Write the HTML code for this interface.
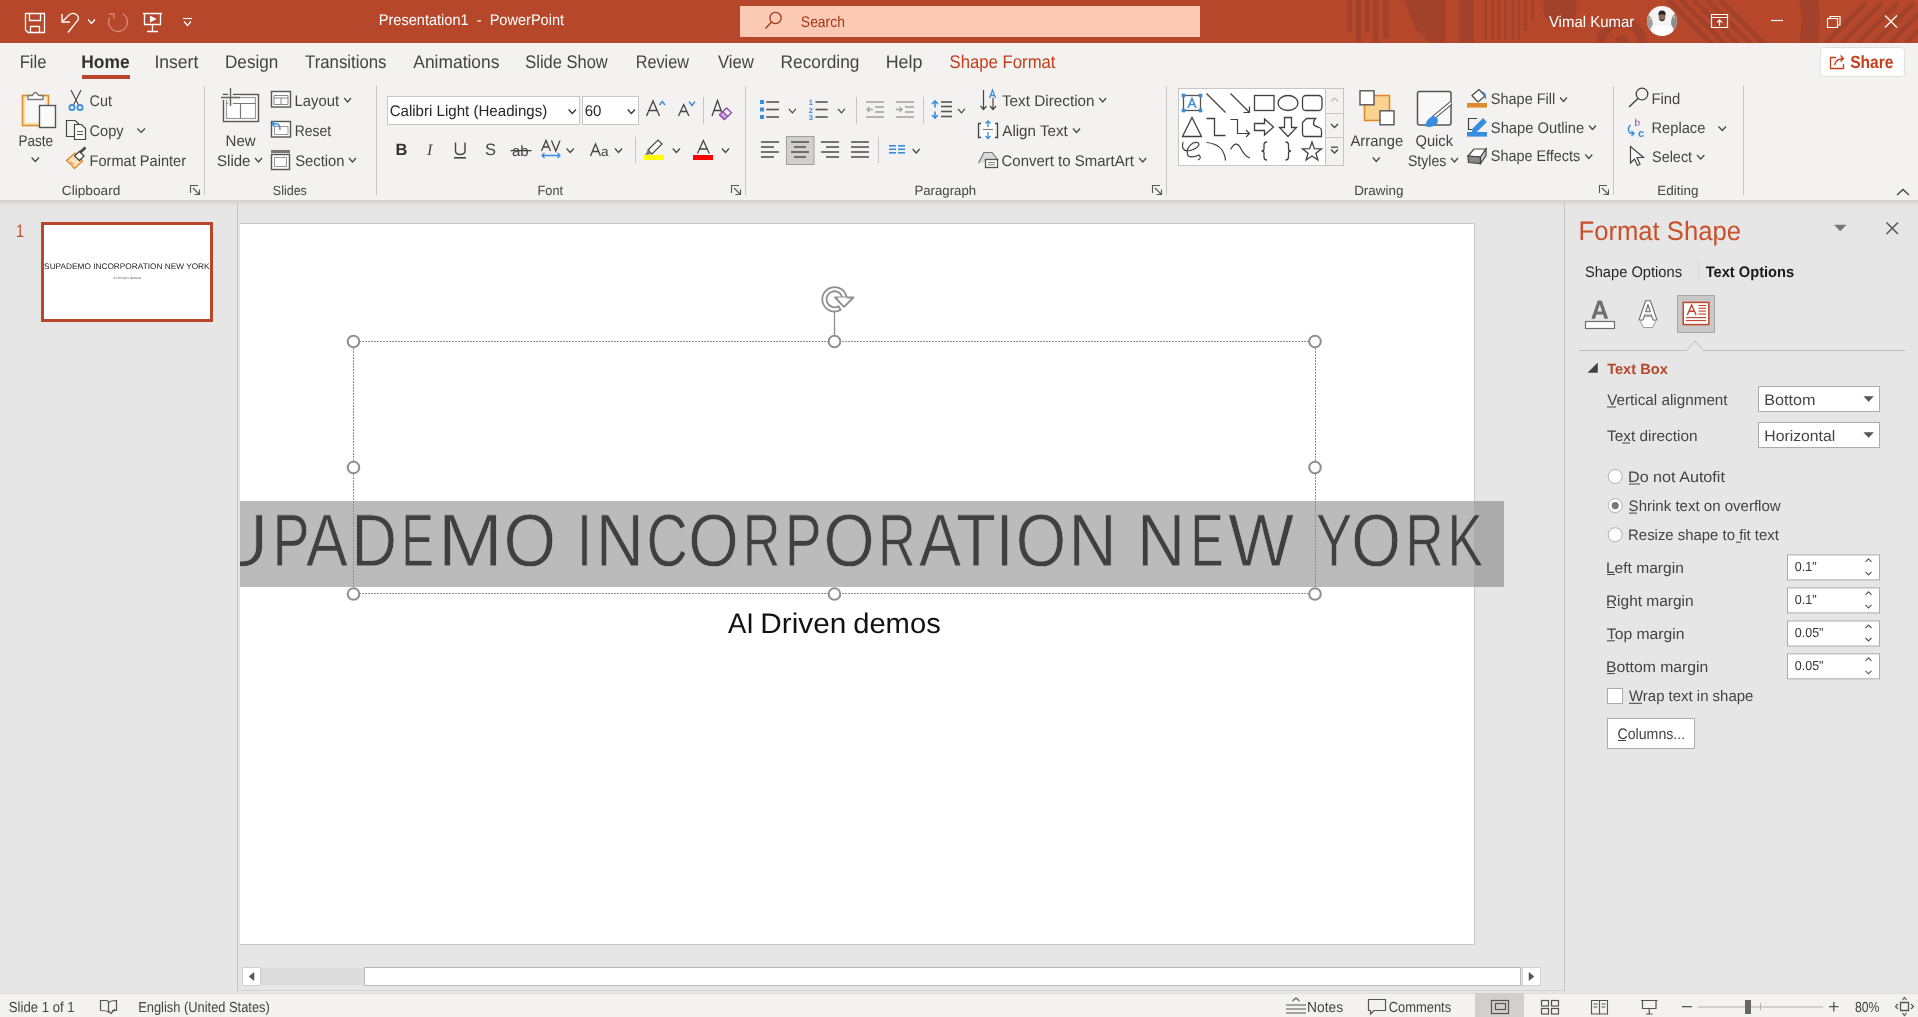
<!DOCTYPE html>
<html><head><meta charset="utf-8"><title>PowerPoint</title>
<style>
html,body{margin:0;padding:0;width:1918px;height:1017px;overflow:hidden;background:#E6E6E6;}
svg{display:block;text-rendering:geometricPrecision;will-change:transform;font-family:"Liberation Sans",sans-serif;}
</style></head><body>
<svg width="1918" height="1017" viewBox="0 0 1918 1017">
<rect x="0" y="0" width="1918" height="43" fill="#B7472A"/>
<clipPath id="tbc"><rect x="0" y="0" width="1918" height="43"/></clipPath><g clip-path="url(#tbc)">
<rect x="1347" y="0" width="5" height="32" fill="#A3422B"/>
<rect x="1356" y="0" width="5" height="42" fill="#A3422B"/>
<rect x="1365" y="0" width="5" height="32" fill="#A3422B"/>
<rect x="1373" y="0" width="5.5" height="43" fill="#A3422B"/>
<rect x="1383" y="0" width="6" height="38" fill="#A3422B"/>
<rect x="1429.5" y="0" width="16.0" height="43" fill="#A3422B"/>
<rect x="1459" y="0" width="15" height="43" fill="#A3422B"/>
<rect x="1484.5" y="0" width="2.0" height="40" fill="#A3422B"/>
<rect x="1491" y="0" width="3" height="40" fill="#A3422B"/>
<rect x="1497.5" y="0" width="2.5" height="40" fill="#A3422B"/>
<rect x="1504" y="0" width="3" height="40" fill="#A3422B"/>
<rect x="1511.5" y="0" width="2.5" height="40" fill="#A3422B"/>
<rect x="1518" y="0" width="2" height="40" fill="#A3422B"/>
<rect x="1524" y="0" width="3" height="30" fill="#A3422B"/>
<rect x="1531" y="0" width="3" height="20" fill="#A3422B"/>
<path d="M1404 0 H1430 V43 L1416 30 Z" fill="#A3422B"/>
<circle cx="1560" cy="8" r="17" fill="#A3422B"/>
<circle cx="1622" cy="44" r="21" fill="none" stroke="#A3422B" stroke-width="9"/>
<circle cx="1622" cy="42" r="7" fill="#A3422B"/>
<path d="M1770 -60 A103 103 0 0 1 1770 104" fill="none" stroke="#A3422B" stroke-width="18"/>
<path d="M1668 0 L1713 45" stroke="#A3422B" stroke-width="5" fill="none"/>
<path d="M1681 0 L1726 45" stroke="#A3422B" stroke-width="5" fill="none"/>
<path d="M1694 0 L1739 45" stroke="#A3422B" stroke-width="5" fill="none"/>
<path d="M1707 0 L1752 45" stroke="#A3422B" stroke-width="5" fill="none"/>
<path d="M1720 0 L1765 45" stroke="#A3422B" stroke-width="5" fill="none"/>
<path d="M1826 43 L1866 3" stroke="#A3422B" stroke-width="5" fill="none"/>
<path d="M1842 43 L1882 3" stroke="#A3422B" stroke-width="5" fill="none"/>
<path d="M1858 43 L1898 3" stroke="#A3422B" stroke-width="5" fill="none"/>
<path d="M1874 43 L1914 3" stroke="#A3422B" stroke-width="5" fill="none"/>
<path d="M1890 43 L1930 3" stroke="#A3422B" stroke-width="5" fill="none"/>
<path d="M1906 43 L1946 3" stroke="#A3422B" stroke-width="5" fill="none"/>
</g>
<rect x="0" y="43" width="1918" height="157" fill="#F3F2F1"/>
<defs><linearGradient id="sh" x1="0" y1="0" x2="0" y2="1"><stop offset="0" stop-color="#D2D0CE"/><stop offset="1" stop-color="#E6E6E6"/></linearGradient></defs>
<rect x="0" y="200" width="1918" height="793" fill="#E6E6E6"/>
<rect x="0" y="200" width="1918" height="6" fill="url(#sh)"/>
<rect x="0" y="993" width="1918" height="24" fill="#F3F2F1"/>
<rect x="0" y="993" width="1918" height="1" fill="#E1DFDD"/>
<path d="M25.5 13.5 H44.5 V32.5 H28 L25.5 30 Z" stroke="#FFFFFF" stroke-width="1.3" fill="none"/>
<path d="M29.5 13.5 V20.5 H40.5 V13.5" stroke="#FFFFFF" stroke-width="1.3" fill="none"/>
<path d="M30.5 32.5 V26.5 H39.5 V32.5" stroke="#FFFFFF" stroke-width="1.3" fill="none"/>
<path d="M62 14 V22 H70" stroke="#FFFFFF" stroke-width="1.3" fill="none"/>
<path d="M62.5 21.5 L69 15 C74 11 80 16 78 20 L68 32.5" stroke="#FFFFFF" stroke-width="1.3" fill="none"/>
<path d="M88 19.5 L91.5 23.5 L95 19.5" stroke="#FFFFFF" stroke-width="1.2" fill="none"/>
<circle cx="118" cy="22" r="9.5" fill="none" stroke="#D98C78" stroke-width="1.3" stroke-dasharray="44 16" transform="rotate(-60 118 22)"/>
<path d="M109 14 H114 V19" stroke="#D98C78" stroke-width="1.3" fill="none"/>
<path d="M143 13.5 H162" stroke="#FFFFFF" stroke-width="1.5" fill="none"/>
<path d="M144.5 13.5 V24.5 H160.5 V13.5" stroke="#FFFFFF" stroke-width="1.3" fill="none"/>
<path d="M152.5 24.5 V31.5 M147 31.5 H158" stroke="#FFFFFF" stroke-width="1.3" fill="none"/>
<path d="M150.5 16.5 L155.5 19 L150.5 21.5 Z" stroke="#FFFFFF" stroke-width="1.1" fill="#FFFFFF"/>
<path d="M183 18.5 H192" stroke="#FFFFFF" stroke-width="1.2" fill="none"/>
<path d="M184 21.5 L187.5 25.5 L191 21.5" stroke="#FFFFFF" stroke-width="1.2" fill="none"/>
<text x="378.81" y="25.00" font-size="15.41" textLength="185.30" lengthAdjust="spacingAndGlyphs" fill="#FFFFFF">Presentation1  -  PowerPoint</text>
<rect x="740" y="6" width="460" height="31" fill="#FCC9B4"/>
<circle cx="775.5" cy="18" r="5.6" fill="none" stroke="#A0391E" stroke-width="1.3"/>
<path d="M771.5 22 L765.5 28.5" stroke="#A0391E" stroke-width="1.4" fill="none"/>
<text x="800.87" y="26.80" font-size="15.41" textLength="44.03" lengthAdjust="spacingAndGlyphs" fill="#A0391E">Search</text>
<text x="1548.93" y="26.90" font-size="15.55" textLength="85.31" lengthAdjust="spacingAndGlyphs" fill="#FFFFFF">Vimal Kumar</text>
<clipPath id="avc"><circle cx="1662" cy="21" r="15"/></clipPath><g clip-path="url(#avc)">
<rect x="1647" y="6" width="30" height="30" fill="#F4F4F4"/>
<path d="M1647 14 Q1652 16 1653 24 L1650 30 L1647 30 Z" fill="#9C9C9C"/>
<path d="M1677 12 Q1671 15 1671 24 L1674 30 L1677 30 Z" fill="#8E8E8E"/>
<circle cx="1650" cy="19" r="0.9" fill="#E8D84A"/><circle cx="1674" cy="17" r="0.9" fill="#E8D84A"/>
<path d="M1650 37 Q1650 26 1662 25 Q1674 26 1674 37 Z" fill="#FFFFFF"/>
<ellipse cx="1662" cy="17" rx="3.3" ry="4.3" fill="#8B6A58"/>
<path d="M1658.4 15.5 Q1658 10.5 1662 10.5 Q1666 10.5 1665.6 15.5 Q1662 13 1658.4 15.5 Z" fill="#222"/>
<path d="M1659 19 Q1662 23.5 1665 19 Q1662 20.5 1659 19 Z" fill="#333"/>
</g>
<path d="M1711.5 14.5 H1727.5 V27.5 H1711.5 Z M1711.5 17.5 H1727.5" stroke="#FFFFFF" stroke-width="1.2" fill="none"/>
<path d="M1719.5 26 V20 M1717 22.5 L1719.5 20 L1722 22.5" stroke="#FFFFFF" stroke-width="1.2" fill="none"/>
<path d="M1771 20.5 H1783" stroke="#FFFFFF" stroke-width="1.2" fill="none"/>
<path d="M1827.5 18.5 H1837.5 V27.5 H1827.5 Z" stroke="#FFFFFF" stroke-width="1.2" fill="none"/>
<path d="M1830 18 V16.5 H1840 V25 H1838" stroke="#FFFFFF" stroke-width="1.2" fill="none"/>
<path d="M1885 15.5 L1897 27.5 M1897 15.5 L1885 27.5" stroke="#FFFFFF" stroke-width="1.2" fill="none"/>
<text x="19.64" y="68.30" font-size="18.31" textLength="26.80" lengthAdjust="spacingAndGlyphs" fill="#444444">File</text>
<text x="81.34" y="68.30" font-size="18.31" textLength="48.26" lengthAdjust="spacingAndGlyphs" fill="#323130" font-weight="700">Home</text>
<rect x="82" y="75" width="48" height="4" fill="#B7472A"/>
<text x="154.38" y="68.30" font-size="18.31" textLength="43.95" lengthAdjust="spacingAndGlyphs" fill="#444444">Insert</text>
<text x="224.99" y="68.30" font-size="18.31" textLength="53.32" lengthAdjust="spacingAndGlyphs" fill="#444444">Design</text>
<text x="305.03" y="68.30" font-size="18.31" textLength="81.48" lengthAdjust="spacingAndGlyphs" fill="#444444">Transitions</text>
<text x="413.27" y="68.30" font-size="18.31" textLength="86.16" lengthAdjust="spacingAndGlyphs" fill="#444444">Animations</text>
<text x="525.25" y="68.30" font-size="18.31" textLength="82.51" lengthAdjust="spacingAndGlyphs" fill="#444444">Slide Show</text>
<text x="635.67" y="68.30" font-size="18.31" textLength="53.29" lengthAdjust="spacingAndGlyphs" fill="#444444">Review</text>
<text x="717.93" y="68.30" font-size="18.31" textLength="35.83" lengthAdjust="spacingAndGlyphs" fill="#444444">View</text>
<text x="780.58" y="68.30" font-size="18.31" textLength="78.83" lengthAdjust="spacingAndGlyphs" fill="#444444">Recording</text>
<text x="885.74" y="68.30" font-size="18.31" textLength="36.71" lengthAdjust="spacingAndGlyphs" fill="#444444">Help</text>
<text x="949.54" y="68.30" font-size="18.31" textLength="105.98" lengthAdjust="spacingAndGlyphs" fill="#C43E1C">Shape Format</text>
<rect x="1820.5" y="47.5" width="84" height="29" rx="3" fill="#FFFFFF" stroke="#E1DFDD" stroke-width="1"/>
<path d="M1836 57.5 H1830.5 V68.5 H1843.5 V64" stroke="#C43E1C" stroke-width="1.3" fill="none"/>
<path d="M1834.5 65 Q1836 59 1843 58.5 M1840.5 55.5 L1843.5 58.5 L1840.5 61.5" stroke="#C43E1C" stroke-width="1.3" fill="none"/>
<text x="1850.15" y="68.20" font-size="17.44" textLength="43.38" lengthAdjust="spacingAndGlyphs" fill="#C43E1C" font-weight="700">Share</text>
<rect x="22.5" y="95.5" width="26" height="30" fill="#FCE4B8" stroke="#E08A2E" stroke-width="1.6"/>
<rect x="25.5" y="98.5" width="20" height="24" fill="#F8F8F8"/>
<path d="M28 99.5 H43 V95.5 H38.5 Q35.5 89.5 32.5 95.5 H28 Z" fill="#FFFFFF" stroke="#777" stroke-width="1.3"/>
<rect x="39.5" y="105.5" width="16" height="22" fill="#FAFAFA" stroke="#555" stroke-width="1.4"/>
<text x="18.39" y="146.00" font-size="15.41" textLength="34.72" lengthAdjust="spacingAndGlyphs" fill="#444444">Paste</text>
<path d="M31.6 157.5 L35.3 161.5 L39 157.5" stroke="#444" stroke-width="1.2" fill="none"/>
<path d="M71 90 L79 106 M81 90 L73 106" stroke="#444" stroke-width="1.1" fill="none"/>
<circle cx="72" cy="107.5" r="2.6" fill="none" stroke="#3A8DDE" stroke-width="1.8"/>
<circle cx="80" cy="107.5" r="2.6" fill="none" stroke="#3A8DDE" stroke-width="1.8"/>
<text x="89.57" y="105.80" font-size="15.41" textLength="22.33" lengthAdjust="spacingAndGlyphs" fill="#444444">Cut</text>
<path d="M74 136.5 H66.5 V120.5 H75 L79 124" stroke="#444" stroke-width="1.2" fill="none"/>
<path d="M74.5 124.5 H81.5 L85.5 128.5 V139.5 H74.5 Z" fill="#FFF" stroke="#444" stroke-width="1.2"/>
<path d="M77 131.5 H83 M77 134.5 H83" stroke="#555" stroke-width="1" fill="none"/>
<text x="89.56" y="135.70" font-size="15.41" textLength="34.07" lengthAdjust="spacingAndGlyphs" fill="#444444">Copy</text>
<path d="M137.4 128.5 L141.2 132.5 L145 128.5" stroke="#444" stroke-width="1.2" fill="none"/>
<path d="M66.5 160.5 L75 153 L82.5 161 L74.5 168.5 Q72 165 66.5 160.5 Z" fill="#FBE3C2" stroke="#E08A2E" stroke-width="1.5" stroke-linejoin="round"/>
<path d="M70 161.5 L74 164.5" stroke="#E08A2E" stroke-width="1" fill="none"/>
<path d="M74.5 156 L79.5 151.5 L84 156 L79.5 160.5 Z" fill="#FFFFFF" stroke="#444" stroke-width="1.3"/>
<path d="M80 152.5 L85.5 147.5" stroke="#444" stroke-width="2.6" fill="none"/>
<text x="89.60" y="165.60" font-size="15.41" textLength="96.44" lengthAdjust="spacingAndGlyphs" fill="#444444">Format Painter</text>
<text x="61.81" y="194.90" font-size="13.37" textLength="58.58" lengthAdjust="spacingAndGlyphs" fill="#444444">Clipboard</text>
<path d="M190.5 193 V185.5 H198" stroke="#555" stroke-width="1.1" fill="none"/>
<path d="M193 188 L199.5 194.5 M199.5 189.5 V194.5 H194.5" stroke="#555" stroke-width="1.1" fill="none"/>
<rect x="204" y="86" width="1" height="109" fill="#C8C6C4"/>
<rect x="223.5" y="94.5" width="35" height="27" fill="#FFF" stroke="#555" stroke-width="1.4"/>
<rect x="226.5" y="97.5" width="29" height="21" fill="none" stroke="#999" stroke-width="1.2"/>
<path d="M226.5 103.5 H255.5 M240.5 103.5 V118.5" stroke="#777" stroke-width="1.2" fill="none"/>
<rect x="228" y="88" width="5" height="18" fill="#F3F2F1"/>
<rect x="221" y="95" width="19" height="5" fill="#F3F2F1"/>
<path d="M230.5 88 V106 M221 97.5 H240" stroke="#666" stroke-width="1.4" fill="none"/>
<text x="225.57" y="145.60" font-size="15.41" textLength="30.10" lengthAdjust="spacingAndGlyphs" fill="#444444">New</text>
<text x="217.02" y="165.60" font-size="15.41" textLength="33.45" lengthAdjust="spacingAndGlyphs" fill="#444444">Slide</text>
<path d="M255 158 L258.5 162 L262 158" stroke="#444" stroke-width="1.2" fill="none"/>
<rect x="271.5" y="91.5" width="19" height="15.5" fill="#FFF" stroke="#555" stroke-width="1.4"/>
<path d="M274 95.5 H288 M274 95.5 V104.5 H288 V95.5 M281 98 V104.5 M274 98 H288" stroke="#888" stroke-width="1" fill="none"/>
<text x="294.59" y="105.80" font-size="15.41" textLength="44.42" lengthAdjust="spacingAndGlyphs" fill="#444444">Layout</text>
<path d="M344.2 98 L347.6 102 L351 98" stroke="#444" stroke-width="1.2" fill="none"/>
<rect x="271.5" y="121.5" width="19" height="15.5" fill="#FFF" stroke="#555" stroke-width="1.4"/>
<path d="M274.5 126.5 H288 V134.5 H274.5 Z" stroke="#999" stroke-width="1" fill="none"/>
<path d="M272 124 L275 121 M272 124 L275 127 M272 124 H277 Q280 124 280 130" stroke="#3A8DDE" stroke-width="1.4" fill="none"/>
<text x="294.66" y="135.90" font-size="15.41" textLength="36.45" lengthAdjust="spacingAndGlyphs" fill="#444444">Reset</text>
<rect x="271" y="150" width="19" height="3" fill="#777"/>
<rect x="271.5" y="154.5" width="18" height="15" fill="#FFF" stroke="#555" stroke-width="1.4"/>
<rect x="274.5" y="157.5" width="12" height="9" fill="none" stroke="#999" stroke-width="1"/>
<text x="295.13" y="165.60" font-size="15.41" textLength="49.44" lengthAdjust="spacingAndGlyphs" fill="#444444">Section</text>
<path d="M349 158 L352.5 162 L356 158" stroke="#444" stroke-width="1.2" fill="none"/>
<text x="272.83" y="194.90" font-size="13.37" textLength="34.02" lengthAdjust="spacingAndGlyphs" fill="#444444">Slides</text>
<rect x="376" y="86" width="1" height="109" fill="#C8C6C4"/>
<rect x="387.5" y="96.5" width="192" height="28" fill="#FFF" stroke="#C8C6C4" stroke-width="1"/>
<text x="389.63" y="115.80" font-size="15.41" textLength="157.60" lengthAdjust="spacingAndGlyphs" fill="#262626">Calibri Light (Headings)</text>
<path d="M568.6 109.5 L572.3 113.5 L576 109.5" stroke="#333" stroke-width="1.3" fill="none"/>
<rect x="582.5" y="96.5" width="56" height="28" fill="#FFF" stroke="#C8C6C4" stroke-width="1"/>
<text x="584.64" y="116.10" font-size="15.41" textLength="16.75" lengthAdjust="spacingAndGlyphs" fill="#262626">60</text>
<path d="M627.7 109.5 L631.35 113.5 L635 109.5" stroke="#333" stroke-width="1.3" fill="none"/>
<path d="M646.5 116 L653 101 L659.5 116 M648.8 110.5 H657.2" stroke="#444" stroke-width="1.3" fill="none"/>
<path d="M659.5 105 L662.25 101.5 L665 105" stroke="#3A8DDE" stroke-width="1.4" fill="none"/>
<path d="M678.5 116 L683.7 104.5 L688.9 116 M680.4 111.5 H687" stroke="#444" stroke-width="1.3" fill="none"/>
<path d="M689 101.5 L692.0 105.5 L695 101.5" stroke="#3A8DDE" stroke-width="1.4" fill="none"/>
<rect x="703" y="97" width="1" height="27" fill="#C8C6C4"/>
<path d="M712 116 L717.5 100.5 L723 116 M714 110.5 H721" stroke="#444" stroke-width="1.3" fill="none"/>
<path d="M726.7 108 L731.5 112.8 L724.3 119.5 L719.5 114.7 Z" fill="#FFF" stroke="#8E44AD" stroke-width="1.3"/>
<path d="M722.9 111.5 L727.7 116.3 L724.3 119.5 L719.5 114.7 Z" fill="#C9A6DA" stroke="#8E44AD" stroke-width="1.1"/>
<text x="395.5" y="155" font-size="16.5" font-weight="700" fill="#333">B</text>
<text x="427" y="155" font-size="16" font-style="italic" font-family="Liberation Serif" fill="#444">I</text>
<path d="M455.5 142.5 V150.5 Q455.5 154.5 460.2 154.5 Q465 154.5 465 150.5 V142.5" stroke="#444" stroke-width="1.4" fill="none"/>
<rect x="454" y="157" width="12" height="1.6" fill="#444"/>
<text x="485" y="155" font-size="16.5" fill="#444">S</text>
<text x="512" y="156" font-size="15" fill="#444">ab</text>
<rect x="510.5" y="150" width="21" height="1.3" fill="#444"/>
<path d="M541.5 151 L546 140.5 L550.5 151 M543 147 H549 M551.5 140.5 L555.8 151 L560 140.5" stroke="#444" stroke-width="1.3" fill="none"/>
<path d="M542 155.5 H560 M544.5 153 L542 155.5 L544.5 158 M557.5 153 L560 155.5 L557.5 158" stroke="#3A8DDE" stroke-width="1.3" fill="none"/>
<path d="M566.6 148.5 L570.2 152.5 L573.8 148.5" stroke="#444" stroke-width="1.2" fill="none"/>
<path d="M590.5 156 L595.5 144 L600.5 156 M592.5 151.5 H598.5" stroke="#444" stroke-width="1.3" fill="none"/>
<text x="601" y="156" font-size="13.5" fill="#444">a</text>
<path d="M615 148.5 L618.5 152.5 L622 148.5" stroke="#444" stroke-width="1.2" fill="none"/>
<rect x="635" y="137" width="1" height="26" fill="#C8C6C4"/>
<path d="M648 150 L658 140 L662 144 L652 154 Z" fill="#FFF" stroke="#444" stroke-width="1.2"/>
<path d="M648 150 L652 154 L645 155 Z" fill="#777"/>
<rect x="644" y="155" width="20" height="5" fill="#FFFF00"/>
<path d="M672.7 148.5 L676.35 152.5 L680 148.5" stroke="#444" stroke-width="1.2" fill="none"/>
<path d="M697.5 153.5 L703.3 140.5 L709.3 153.5 M699.5 149 H707" stroke="#444" stroke-width="1.3" fill="none"/>
<rect x="693" y="155" width="20" height="5" fill="#FF0000"/>
<path d="M722 148.5 L725.5 152.5 L729 148.5" stroke="#444" stroke-width="1.2" fill="none"/>
<text x="537.55" y="194.90" font-size="13.37" textLength="25.54" lengthAdjust="spacingAndGlyphs" fill="#444444">Font</text>
<path d="M731.5 193 V185.5 H739" stroke="#555" stroke-width="1.1" fill="none"/>
<path d="M734 188 L740.5 194.5 M740.5 189.5 V194.5 H735.5" stroke="#555" stroke-width="1.1" fill="none"/>
<rect x="745" y="86" width="1" height="109" fill="#C8C6C4"/>
<rect x="760" y="100" width="4" height="4" fill="#3A8DDE"/>
<rect x="766.3" y="101.2" width="12.7" height="1.6" fill="#555555"/>
<rect x="760" y="107.5" width="4" height="4" fill="#3A8DDE"/>
<rect x="766.3" y="108.7" width="12.7" height="1.6" fill="#555555"/>
<rect x="760" y="115" width="4" height="4" fill="#3A8DDE"/>
<rect x="766.3" y="116.2" width="12.7" height="1.6" fill="#555555"/>
<path d="M788.8 108.8 L792.4 112.8 L796 108.8" stroke="#444" stroke-width="1.2" fill="none"/>
<text x="808.8" y="105" font-size="7.5" font-weight="700" fill="#3A8DDE">1</text>
<rect x="815.5" y="101.2" width="12.2" height="1.6" fill="#555555"/>
<text x="808.8" y="112.5" font-size="7.5" font-weight="700" fill="#3A8DDE">2</text>
<rect x="815.5" y="108.7" width="12.2" height="1.6" fill="#555555"/>
<text x="808.8" y="120" font-size="7.5" font-weight="700" fill="#3A8DDE">3</text>
<rect x="815.5" y="116.2" width="12.2" height="1.6" fill="#555555"/>
<path d="M838 108.8 L841.5 112.8 L845 108.8" stroke="#444" stroke-width="1.2" fill="none"/>
<rect x="856" y="97" width="1" height="27" fill="#C8C6C4"/>
<rect x="866" y="101.2" width="18" height="1.6" fill="#A6A6A6"/>
<rect x="875" y="106.2" width="9" height="1.6" fill="#A6A6A6"/>
<rect x="875" y="111.2" width="9" height="1.6" fill="#A6A6A6"/>
<rect x="866" y="116.2" width="18" height="1.6" fill="#A6A6A6"/>
<path d="M873 109.5 H867 M869.5 107 L867 109.5 L869.5 112" stroke="#A6A6A6" stroke-width="1.3" fill="none"/>
<rect x="896" y="101.2" width="18" height="1.6" fill="#A6A6A6"/>
<rect x="905" y="106.2" width="9" height="1.6" fill="#A6A6A6"/>
<rect x="905" y="111.2" width="9" height="1.6" fill="#A6A6A6"/>
<rect x="896" y="116.2" width="18" height="1.6" fill="#A6A6A6"/>
<path d="M896 109.5 H902 M899.5 107 L902 109.5 L899.5 112" stroke="#A6A6A6" stroke-width="1.3" fill="none"/>
<rect x="923" y="97" width="1" height="27" fill="#C8C6C4"/>
<path d="M935 101 V107.5 M932 104 L935 101 L938 104 M935 111.5 V118 M932 115 L935 118 L938 115" stroke="#3A8DDE" stroke-width="1.6" fill="none"/>
<rect x="941" y="101.2" width="11" height="1.6" fill="#555555"/>
<rect x="941" y="105.7" width="11" height="1.6" fill="#555555"/>
<rect x="941" y="110.7" width="11" height="1.6" fill="#555555"/>
<rect x="941" y="115.7" width="11" height="1.6" fill="#555555"/>
<path d="M958 108.8 L961.5 112.8 L965 108.8" stroke="#444" stroke-width="1.2" fill="none"/>
<rect x="761" y="141.2" width="18" height="1.6" fill="#555555"/>
<rect x="761" y="146.2" width="13" height="1.6" fill="#555555"/>
<rect x="761" y="151.2" width="18" height="1.6" fill="#555555"/>
<rect x="761" y="156.2" width="13" height="1.6" fill="#555555"/>
<rect x="786.5" y="136.5" width="27.5" height="28" fill="#D2D0CE" stroke="#A19F9D" stroke-width="1"/>
<rect x="791.0" y="141.2" width="18" height="1.6" fill="#555555"/>
<rect x="794.0" y="146.2" width="12" height="1.6" fill="#555555"/>
<rect x="791.0" y="151.2" width="18" height="1.6" fill="#555555"/>
<rect x="794.0" y="156.2" width="12" height="1.6" fill="#555555"/>
<rect x="821" y="141.2" width="18" height="1.6" fill="#555555"/>
<rect x="826" y="146.2" width="13" height="1.6" fill="#555555"/>
<rect x="821" y="151.2" width="18" height="1.6" fill="#555555"/>
<rect x="826" y="156.2" width="13" height="1.6" fill="#555555"/>
<rect x="851" y="141.2" width="18" height="1.6" fill="#555555"/>
<rect x="851" y="146.2" width="18" height="1.6" fill="#555555"/>
<rect x="851" y="151.2" width="18" height="1.6" fill="#555555"/>
<rect x="851" y="156.2" width="18" height="1.6" fill="#555555"/>
<rect x="878" y="137" width="1" height="26" fill="#C8C6C4"/>
<rect x="889" y="145" width="7" height="1.6" fill="#3A8DDE"/>
<rect x="889" y="148.5" width="7" height="1.6" fill="#3A8DDE"/>
<rect x="889" y="152" width="7" height="1.6" fill="#3A8DDE"/>
<rect x="898" y="145" width="7" height="1.6" fill="#3A8DDE"/>
<rect x="898" y="148.5" width="7" height="1.6" fill="#3A8DDE"/>
<rect x="898" y="152" width="7" height="1.6" fill="#3A8DDE"/>
<path d="M912.6 149 L916.2 153 L919.8 149" stroke="#444" stroke-width="1.2" fill="none"/>
<path d="M983.5 90 V109 M980.5 106 L983.5 109.5 L986.5 106" stroke="#444" stroke-width="1.2" fill="none"/>
<path d="M993 98 V109 M990 106 L993 109.5 L996 106" stroke="#444" stroke-width="1.2" fill="none"/>
<path d="M989.5 98 L992.5 90 L995.5 98 M990.5 95.5 H994.5" stroke="#3A8DDE" stroke-width="1.3" fill="none"/>
<text x="1001.96" y="105.80" font-size="15.41" textLength="92.61" lengthAdjust="spacingAndGlyphs" fill="#444444">Text Direction</text>
<path d="M1099.3 98 L1102.6999999999998 102 L1106.1 98" stroke="#444" stroke-width="1.2" fill="none"/>
<path d="M981 123.5 H978.5 V137.5 H981 M995 123.5 H997.5 V137.5 H995" stroke="#444" stroke-width="1.3" fill="none"/>
<rect x="981" y="123" width="14" height="15" fill="#FFFFFF"/>
<path d="M983 129.5 H993" stroke="#777" stroke-width="1.1" fill="none"/>
<path d="M988 121 V127 M985.5 123.5 L988 121 L990.5 123.5 M988 132 V138.5 M985.5 136 L988 138.5 L990.5 136" stroke="#3A8DDE" stroke-width="1.3" fill="none"/>
<text x="1002.27" y="135.70" font-size="15.41" textLength="65.44" lengthAdjust="spacingAndGlyphs" fill="#444444">Align Text</text>
<path d="M1073 128.5 L1076.55 132.5 L1080.1 128.5" stroke="#444" stroke-width="1.2" fill="none"/>
<path d="M978.5 163 L984 152.5 H992 L998 160" fill="#D9D9D9" stroke="#777" stroke-width="1.2"/>
<rect x="985.5" y="159.5" width="12" height="8" fill="#FFF" stroke="#555" stroke-width="1.3"/>
<path d="M988 162.5 H995 M988 164.8 H995" stroke="#777" stroke-width="0.9" fill="none"/>
<text x="1001.54" y="165.70" font-size="15.41" textLength="132.27" lengthAdjust="spacingAndGlyphs" fill="#444444">Convert to SmartArt</text>
<path d="M1139.2 158 L1142.7 162 L1146.2 158" stroke="#444" stroke-width="1.2" fill="none"/>
<text x="914.42" y="194.90" font-size="13.37" textLength="61.74" lengthAdjust="spacingAndGlyphs" fill="#444444">Paragraph</text>
<path d="M1152.5 193 V185.5 H1160" stroke="#555" stroke-width="1.1" fill="none"/>
<path d="M1155 188 L1161.5 194.5 M1161.5 189.5 V194.5 H1156.5" stroke="#555" stroke-width="1.1" fill="none"/>
<rect x="1166" y="86" width="1" height="109" fill="#C8C6C4"/>
<rect x="1178.5" y="88.5" width="165" height="77" fill="#FFFFFF" stroke="#C8C6C4" stroke-width="1"/>
<rect x="1325.5" y="88.5" width="18" height="25" fill="#F3F2F1" stroke="#C8C6C4" stroke-width="1"/>
<rect x="1325.5" y="113.5" width="18" height="24" fill="#F3F2F1" stroke="#C8C6C4" stroke-width="1"/>
<rect x="1325.5" y="137.5" width="18" height="28" fill="#F3F2F1" stroke="#C8C6C4" stroke-width="1"/>
<path d="M1331 101.5 L1334.5 98 L1338 101.5" stroke="#BBB" stroke-width="1.2" fill="none"/>
<path d="M1331 124 L1334.5 127.5 L1338 124" stroke="#444" stroke-width="1.3" fill="none"/>
<rect x="1331" y="146.5" width="7" height="1.3" fill="#444"/>
<path d="M1331 149.5 L1334.5 153 L1338 149.5" stroke="#444" stroke-width="1.3" fill="none"/>
<rect x="1183.5" y="95.5" width="17" height="15" fill="none" stroke="#555" stroke-width="1.3"/>
<rect x="1181.7" y="93.7" width="3.6" height="3.6" fill="#3A8DDE"/>
<rect x="1198.7" y="93.7" width="3.6" height="3.6" fill="#3A8DDE"/>
<rect x="1181.7" y="108.7" width="3.6" height="3.6" fill="#3A8DDE"/>
<rect x="1198.7" y="108.7" width="3.6" height="3.6" fill="#3A8DDE"/>
<path d="M1188 108 L1192 98.5 L1196 108 M1189.5 104.5 H1194.5" stroke="#3A8DDE" stroke-width="1.6" fill="none"/>
<path d="M1206.5 93.5 L1225.5 112.5" stroke="#404040" stroke-width="1.2" fill="none"/>
<path d="M1230.5 93.5 L1249.5 112.5 M1249.5 106.5 V112.5 H1243.5" stroke="#404040" stroke-width="1.2" fill="none"/>
<rect x="1254.5" y="95.5" width="19.5" height="15" fill="none" stroke="#404040" stroke-width="1.3"/>
<ellipse cx="1288" cy="103" rx="10" ry="7.5" fill="none" stroke="#404040" stroke-width="1.3"/>
<rect x="1302.5" y="95.5" width="19.5" height="15" rx="3.5" fill="none" stroke="#404040" stroke-width="1.3"/>
<path d="M1182.5 136.5 L1192 117.5 L1201.5 136.5 Z" stroke="#404040" stroke-width="1.3" fill="none"/>
<path d="M1206.5 118.5 H1214.5 V135.5 H1225.5" stroke="#404040" stroke-width="1.3" fill="none"/>
<path d="M1230.5 119.5 H1237.5 V133.5 H1249.5 M1246 130 L1249.5 133.5 L1246 137" stroke="#404040" stroke-width="1.2" fill="none"/>
<path d="M1254.5 123.5 H1264.5 V119 L1273.5 127 L1264.5 135 V130.5 H1254.5 Z" stroke="#404040" stroke-width="1.3" fill="none"/>
<path d="M1284.5 117.5 H1291.5 V127.5 H1296.5 L1288 136.5 L1279.5 127.5 H1284.5 Z" stroke="#404040" stroke-width="1.3" fill="none"/>
<path d="M1306.5 118.5 H1315.5 Q1313 121 1313.5 124 Q1314 126 1318 127 Q1321.5 128 1321.5 131 V136.5 H1305 Q1302.5 136.5 1302.5 133 V122.5 Z" stroke="#404040" stroke-width="1.3" fill="none"/>
<path d="M1183 142 Q1181 150 1187 151 Q1196 150 1199 145 Q1199 141 1193 143 Q1185 148 1188 156 Q1193 158 1199 155 Q1202 158 1198 160" stroke="#404040" stroke-width="1.2" fill="none"/>
<path d="M1206.5 142.5 Q1224 144 1225.5 160.5" stroke="#404040" stroke-width="1.2" fill="none"/>
<path d="M1230.5 149.5 Q1236 140 1240 147 Q1245 157 1250 158" stroke="#404040" stroke-width="1.2" fill="none"/>
<path d="M1267 142 Q1263.5 142 1264 146 V149 Q1264 151 1261.5 151 Q1264 151 1264 153 V157 Q1264 160 1267 160" stroke="#404040" stroke-width="1.3" fill="none"/>
<path d="M1285.5 142 Q1289 142 1288.5 146 V149 Q1288.5 151 1291 151 Q1288.5 151 1288.5 153 V157 Q1288.5 160 1285.5 160" stroke="#404040" stroke-width="1.3" fill="none"/>
<path d="M1312 142 L1314.4 148.6 L1321.5 148.8 L1315.9 153.2 L1317.9 160 L1312 156 L1306.1 160 L1308.1 153.2 L1302.5 148.8 L1309.6 148.6 Z" stroke="#404040" stroke-width="1.3" fill="none"/>
<rect x="1364.5" y="95.5" width="25" height="25" fill="#FAD391" stroke="#E08A2E" stroke-width="1.6"/>
<rect x="1360" y="90.8" width="14" height="14" fill="#FFF" stroke="#555" stroke-width="1.4"/>
<rect x="1380" y="110.8" width="14" height="14" fill="#FFF" stroke="#555" stroke-width="1.4"/>
<text x="1350.47" y="146.00" font-size="15.41" textLength="52.69" lengthAdjust="spacingAndGlyphs" fill="#444444">Arrange</text>
<path d="M1372.8 157.5 L1376.25 161.5 L1379.7 157.5" stroke="#444" stroke-width="1.2" fill="none"/>
<rect x="1417.5" y="91.5" width="33.5" height="33.5" rx="2" fill="#F8F8F8" stroke="#555" stroke-width="1.5"/>
<path d="M1433 118 L1451 103" stroke="#555" stroke-width="4.2" fill="none"/>
<path d="M1433 118 L1451 103" stroke="#FFF" stroke-width="2" fill="none"/>
<path d="M1425 126 Q1427 118 1433 116 Q1440 117 1437 124 Q1431 129 1425 126 Z" fill="#3A8DDE"/>
<text x="1415.50" y="146.00" font-size="15.41" textLength="37.57" lengthAdjust="spacingAndGlyphs" fill="#444444">Quick</text>
<text x="1407.96" y="165.80" font-size="15.41" textLength="38.35" lengthAdjust="spacingAndGlyphs" fill="#444444">Styles</text>
<path d="M1451 158 L1454.5 162 L1458 158" stroke="#444" stroke-width="1.2" fill="none"/>
<path d="M1472 95.5 L1479 89.5 L1485 96 L1478 102 Z" fill="#FFF" stroke="#444" stroke-width="1.2"/>
<path d="M1482 92 Q1486 93 1485.5 99" stroke="#3A8DDE" stroke-width="1.4" fill="none"/>
<rect x="1467" y="103" width="20" height="4.6" fill="#E08A2E"/>
<text x="1490.84" y="103.70" font-size="15.41" textLength="64.43" lengthAdjust="spacingAndGlyphs" fill="#444444">Shape Fill</text>
<path d="M1560 97.5 L1563.5 101.5 L1567 97.5" stroke="#444" stroke-width="1.2" fill="none"/>
<path d="M1477 118.5 H1468.5 V129.5 H1472" stroke="#444" stroke-width="1.2" fill="none"/>
<path d="M1473 129 L1483 119 L1486 122 L1476 132 L1472.5 132.5 Z" fill="#3A8DDE" stroke="#3A8DDE" stroke-width="1.3"/>
<rect x="1467" y="132" width="20" height="4.6" fill="#3A8DDE"/>
<text x="1490.83" y="132.50" font-size="15.41" textLength="93.32" lengthAdjust="spacingAndGlyphs" fill="#444444">Shape Outline</text>
<path d="M1589 125.5 L1592.5 129.5 L1596 125.5" stroke="#444" stroke-width="1.2" fill="none"/>
<path d="M1468 156 L1474 149 H1486 L1480.5 157 Z" fill="#FFF" stroke="#444" stroke-width="1.2"/>
<path d="M1468 156 L1480.5 157 V163.5 L1468.5 162.5 Z" fill="#888" stroke="#444" stroke-width="1.2"/>
<path d="M1480.5 157 L1486 149 V155.5 L1480.5 163.5 Z" fill="#CCC" stroke="#444" stroke-width="1.2"/>
<text x="1490.85" y="161.40" font-size="15.41" textLength="89.37" lengthAdjust="spacingAndGlyphs" fill="#444444">Shape Effects</text>
<path d="M1585.3 154.5 L1588.8 158.5 L1592.3 154.5" stroke="#444" stroke-width="1.2" fill="none"/>
<text x="1354.20" y="195.00" font-size="13.37" textLength="49.16" lengthAdjust="spacingAndGlyphs" fill="#444444">Drawing</text>
<path d="M1599.5 193 V185.5 H1607" stroke="#555" stroke-width="1.1" fill="none"/>
<path d="M1602 188 L1608.5 194.5 M1608.5 189.5 V194.5 H1603.5" stroke="#555" stroke-width="1.1" fill="none"/>
<rect x="1613" y="86" width="1" height="109" fill="#C8C6C4"/>
<circle cx="1642" cy="94" r="5.8" fill="none" stroke="#444" stroke-width="1.3"/>
<path d="M1638 98.5 L1629 107" stroke="#444" stroke-width="1.5" fill="none"/>
<text x="1651.48" y="103.70" font-size="15.41" textLength="28.87" lengthAdjust="spacingAndGlyphs" fill="#444444">Find</text>
<path d="M1630.5 125 Q1626.5 129 1630 133 L1634 133.5 M1631.5 131 L1634 133.5 L1631.5 136" stroke="#3A8DDE" stroke-width="1.4" fill="none"/>
<text x="1634.5" y="126" font-size="10" fill="#8E44AD">b</text>
<text x="1638" y="136.5" font-size="11" font-weight="700" fill="#3A8DDE">c</text>
<text x="1651.50" y="133.20" font-size="15.41" textLength="53.86" lengthAdjust="spacingAndGlyphs" fill="#444444">Replace</text>
<path d="M1718.5 126.5 L1722.25 130.5 L1726 126.5" stroke="#444" stroke-width="1.2" fill="none"/>
<path d="M1630.5 146.5 V163 L1634.5 159 L1637.5 165.5 L1640 164.2 L1637 157.5 H1643.5 Z" fill="#FFF" stroke="#444" stroke-width="1.2"/>
<text x="1652.05" y="161.80" font-size="15.41" textLength="40.06" lengthAdjust="spacingAndGlyphs" fill="#444444">Select</text>
<path d="M1697 155 L1700.7 159 L1704.4 155" stroke="#444" stroke-width="1.2" fill="none"/>
<text x="1657.30" y="194.80" font-size="13.37" textLength="41.17" lengthAdjust="spacingAndGlyphs" fill="#444444">Editing</text>
<rect x="1743" y="86" width="1" height="109" fill="#C8C6C4"/>
<path d="M1897 195 L1903.0 189.5 L1909 195" stroke="#444" stroke-width="1.4" fill="none"/>
<text x="15.90" y="237.00" font-size="18.02" textLength="8.00" lengthAdjust="spacingAndGlyphs" fill="#C0502D">1</text>
<rect x="41" y="222" width="172" height="100" fill="#B7472A"/>
<rect x="44" y="225" width="166" height="94" fill="#FFFFFF"/>
<clipPath id="thc"><rect x="44" y="225" width="166" height="94"/></clipPath>
<g clip-path="url(#thc)">
<text x="44.13" y="268.80" font-size="8.14" textLength="165.46" lengthAdjust="spacingAndGlyphs" fill="#222222">SUPADEMO INCORPORATION NEW YORK</text>
<text x="113.29" y="278.50" font-size="3.34" textLength="27.64" lengthAdjust="spacingAndGlyphs" fill="#555555">AI Driven demos</text>
</g>
<rect x="237" y="203" width="1" height="788" fill="#C2C2C2"/>
<rect x="238" y="990" width="1327" height="1" fill="#D4D4D4"/>
<rect x="1564" y="203" width="1" height="788" fill="#C2C2C2"/>
<rect x="240" y="224" width="1234" height="720" fill="#FFFFFF"/>
<rect x="240" y="223" width="1235" height="1" fill="#C8C8C8"/>
<rect x="1474" y="223" width="1" height="721" fill="#C8C8C8"/>
<rect x="240" y="944" width="1235" height="1" fill="#C8C8C8"/>
<rect x="240" y="501" width="1234" height="86" fill="#BBBBBB"/>
<rect x="1474" y="501" width="30" height="86" fill="#ABABAB"/>
<clipPath id="slc"><rect x="240" y="200" width="1324" height="790"/></clipPath>
<g clip-path="url(#slc)">
<text x="216.50" y="566.20" font-size="74.42" textLength="51.50" lengthAdjust="spacingAndGlyphs" fill="#404040" stroke="#BBBBBB" stroke-width="0.8">U</text>
<text x="272.44" y="566.20" font-size="74.42" textLength="37.10" lengthAdjust="spacingAndGlyphs" fill="#404040" stroke="#BBBBBB" stroke-width="0.8">P</text>
<text x="305.88" y="566.20" font-size="74.42" textLength="41.85" lengthAdjust="spacingAndGlyphs" fill="#404040" stroke="#BBBBBB" stroke-width="0.8">A</text>
<text x="351.53" y="566.20" font-size="74.42" textLength="45.48" lengthAdjust="spacingAndGlyphs" fill="#404040" stroke="#BBBBBB" stroke-width="0.8">D</text>
<text x="401.17" y="566.20" font-size="74.42" textLength="32.73" lengthAdjust="spacingAndGlyphs" fill="#404040" stroke="#BBBBBB" stroke-width="0.8">E</text>
<text x="437.87" y="566.20" font-size="74.42" textLength="65.25" lengthAdjust="spacingAndGlyphs" fill="#404040" stroke="#BBBBBB" stroke-width="0.8">M</text>
<text x="503.60" y="566.20" font-size="74.42" textLength="52.53" lengthAdjust="spacingAndGlyphs" fill="#404040" stroke="#BBBBBB" stroke-width="0.8">O</text>
<text x="576.65" y="566.20" font-size="74.42" textLength="15.49" lengthAdjust="spacingAndGlyphs" fill="#404040" stroke="#BBBBBB" stroke-width="0.8">I</text>
<text x="595.84" y="566.20" font-size="74.42" textLength="48.09" lengthAdjust="spacingAndGlyphs" fill="#404040" stroke="#BBBBBB" stroke-width="0.8">N</text>
<text x="646.60" y="566.20" font-size="74.42" textLength="41.28" lengthAdjust="spacingAndGlyphs" fill="#404040" stroke="#BBBBBB" stroke-width="0.8">C</text>
<text x="688.13" y="566.20" font-size="74.42" textLength="50.48" lengthAdjust="spacingAndGlyphs" fill="#404040" stroke="#BBBBBB" stroke-width="0.8">O</text>
<text x="742.72" y="566.20" font-size="74.42" textLength="37.70" lengthAdjust="spacingAndGlyphs" fill="#404040" stroke="#BBBBBB" stroke-width="0.8">R</text>
<text x="784.87" y="566.20" font-size="74.42" textLength="36.84" lengthAdjust="spacingAndGlyphs" fill="#404040" stroke="#BBBBBB" stroke-width="0.8">P</text>
<text x="823.48" y="566.20" font-size="74.42" textLength="51.16" lengthAdjust="spacingAndGlyphs" fill="#404040" stroke="#BBBBBB" stroke-width="0.8">O</text>
<text x="878.02" y="566.20" font-size="74.42" textLength="37.70" lengthAdjust="spacingAndGlyphs" fill="#404040" stroke="#BBBBBB" stroke-width="0.8">R</text>
<text x="918.88" y="566.20" font-size="74.42" textLength="42.25" lengthAdjust="spacingAndGlyphs" fill="#404040" stroke="#BBBBBB" stroke-width="0.8">A</text>
<text x="956.14" y="566.20" font-size="74.42" textLength="39.65" lengthAdjust="spacingAndGlyphs" fill="#404040" stroke="#BBBBBB" stroke-width="0.8">T</text>
<text x="995.76" y="566.20" font-size="74.42" textLength="17.87" lengthAdjust="spacingAndGlyphs" fill="#404040" stroke="#BBBBBB" stroke-width="0.8">I</text>
<text x="1015.63" y="566.20" font-size="74.42" textLength="50.48" lengthAdjust="spacingAndGlyphs" fill="#404040" stroke="#BBBBBB" stroke-width="0.8">O</text>
<text x="1068.54" y="566.20" font-size="74.42" textLength="48.09" lengthAdjust="spacingAndGlyphs" fill="#404040" stroke="#BBBBBB" stroke-width="0.8">N</text>
<text x="1137.02" y="566.20" font-size="74.42" textLength="48.22" lengthAdjust="spacingAndGlyphs" fill="#404040" stroke="#BBBBBB" stroke-width="0.8">N</text>
<text x="1190.53" y="566.20" font-size="74.42" textLength="33.10" lengthAdjust="spacingAndGlyphs" fill="#404040" stroke="#BBBBBB" stroke-width="0.8">E</text>
<text x="1228.19" y="566.20" font-size="74.42" textLength="65.74" lengthAdjust="spacingAndGlyphs" fill="#404040" stroke="#BBBBBB" stroke-width="0.8">W</text>
<text x="1316.01" y="566.20" font-size="74.42" textLength="36.18" lengthAdjust="spacingAndGlyphs" fill="#404040" stroke="#BBBBBB" stroke-width="0.8">Y</text>
<text x="1351.37" y="566.20" font-size="74.42" textLength="49.68" lengthAdjust="spacingAndGlyphs" fill="#404040" stroke="#BBBBBB" stroke-width="0.8">O</text>
<text x="1405.38" y="566.20" font-size="74.42" textLength="38.07" lengthAdjust="spacingAndGlyphs" fill="#404040" stroke="#BBBBBB" stroke-width="0.8">R</text>
<text x="1447.61" y="566.20" font-size="74.42" textLength="35.69" lengthAdjust="spacingAndGlyphs" fill="#404040" stroke="#BBBBBB" stroke-width="0.8">K</text>
</g>
<text x="727.95" y="632.75" font-size="28.34" textLength="25.99" lengthAdjust="spacingAndGlyphs" fill="#111111">AI</text>
<text x="760.36" y="632.75" font-size="28.34" textLength="85.87" lengthAdjust="spacingAndGlyphs" fill="#111111">Driven</text>
<text x="853.17" y="632.75" font-size="28.34" textLength="87.58" lengthAdjust="spacingAndGlyphs" fill="#111111">demos</text>
<path d="M353 341.5 H1316" stroke="#8E8E8E" stroke-width="1" fill="none" stroke-dasharray="2 1"/>
<path d="M353 593.5 H1316" stroke="#8E8E8E" stroke-width="1" fill="none" stroke-dasharray="2 1"/>
<path d="M353.5 342 V594" stroke="#8E8E8E" stroke-width="1" fill="none" stroke-dasharray="2 1"/>
<path d="M1315.5 342 V594" stroke="#8E8E8E" stroke-width="1" fill="none" stroke-dasharray="2 1"/>
<path d="M834.5 312 V335" stroke="#8E8E8E" stroke-width="1.3" fill="none"/>
<circle cx="353.5" cy="341.5" r="5.8" fill="#FFFFFF" stroke="#8E8E8E" stroke-width="2"/>
<circle cx="834.5" cy="341.5" r="5.8" fill="#FFFFFF" stroke="#8E8E8E" stroke-width="2"/>
<circle cx="1315" cy="341.5" r="5.8" fill="#FFFFFF" stroke="#8E8E8E" stroke-width="2"/>
<circle cx="353.5" cy="467.5" r="5.8" fill="#FFFFFF" stroke="#8E8E8E" stroke-width="2"/>
<circle cx="1315" cy="467.5" r="5.8" fill="#FFFFFF" stroke="#8E8E8E" stroke-width="2"/>
<circle cx="353.5" cy="594" r="5.8" fill="#FFFFFF" stroke="#8E8E8E" stroke-width="2"/>
<circle cx="834.5" cy="594" r="5.8" fill="#FFFFFF" stroke="#8E8E8E" stroke-width="2"/>
<circle cx="1315" cy="594" r="5.8" fill="#FFFFFF" stroke="#8E8E8E" stroke-width="2"/>
<path d="M846.6 297.6 A12.2 12.2 0 1 0 840.6 309.9 L838.5 306.2 A8 8 0 1 1 842.4 298.2 Z" fill="#FFFFFF" stroke="#8E8E8E" stroke-width="1.8" stroke-linejoin="round"/>
<path d="M835 297.5 H853.5 L844 306.8 Z" fill="#FFFFFF" stroke="#8E8E8E" stroke-width="1.8" stroke-linejoin="round"/>
<rect x="838" y="297.5" width="8.5" height="1.6" fill="#FFFFFF"/>
<rect x="242.5" y="967.5" width="18" height="18" fill="#FFFFFF" stroke="#D0D0D0" stroke-width="1"/>
<path d="M254 972.5 V980.5 L249 976.5 Z" stroke="#555" stroke-width="0.5" fill="#555"/>
<rect x="261" y="968" width="103" height="17" fill="#DCDCDC"/>
<rect x="364.5" y="967.5" width="1156" height="18" fill="#FFFFFF" stroke="#B8B8B8" stroke-width="1"/>
<rect x="1522.5" y="967.5" width="18" height="18" fill="#FFFFFF" stroke="#D0D0D0" stroke-width="1"/>
<path d="M1529 972.5 V980.5 L1534 976.5 Z" stroke="#555" stroke-width="0.5" fill="#555"/>
<text x="1578.50" y="239.60" font-size="26.74" textLength="162.54" lengthAdjust="spacingAndGlyphs" fill="#C8502A">Format Shape</text>
<path d="M1834.5 225 H1846 L1840.25 231 Z" stroke="#777" stroke-width="0.5" fill="#777"/>
<path d="M1886.5 222.5 L1898 234 M1898 222.5 L1886.5 234" stroke="#555" stroke-width="1.5" fill="none"/>
<text x="1584.93" y="276.80" font-size="15.26" textLength="97.10" lengthAdjust="spacingAndGlyphs" fill="#262626">Shape Options</text>
<line x1="1698.5" y1="261" x2="1698.5" y2="280" stroke="#C8C8C8" stroke-width="1" stroke-dasharray="1 1"/>
<text x="1705.64" y="276.80" font-size="15.26" textLength="88.56" lengthAdjust="spacingAndGlyphs" fill="#1A1A1A" font-weight="700">Text Options</text>
<path d="M1597.8 300.6 H1601.7 L1608.2 318.8 H1604.5 L1603.1 314.6 H1596.4 L1595 318.8 H1591.3 Z M1597.4 311.6 H1602.1 L1599.75 304.2 Z" fill="#6E6E6E" fill-rule="evenodd"/>
<rect x="1585.5" y="321.5" width="29" height="7" fill="#FFF" stroke="#6E6E6E" stroke-width="1.2"/>
<path d="M1640.5 321.5 L1643.5 316.5 H1652.5 L1655.5 321.5 L1652.5 327.5 H1643.5 Z" fill="#FFFFFF" stroke="#9A9A9A" stroke-width="1"/>
<path d="M1645.6 300.8 H1650.4 L1657 320 H1653 L1651.4 315 H1644.6 L1643 320 H1639 Z M1645.6 311.8 H1650.4 L1648 304.5 Z" fill="#FFFFFF" fill-rule="evenodd" stroke="#707070" stroke-width="1.1" stroke-linejoin="round"/>
<rect x="1677.5" y="295.5" width="37" height="37" fill="#C8C8C8" stroke="#A6A6A6" stroke-width="1"/>
<rect x="1683.2" y="302.4" width="25.6" height="22.2" fill="#FFF" stroke="#C0452A" stroke-width="1.5"/>
<path d="M1687.3 315 L1691.7 305 L1696.1 315 M1689 311.3 H1694.4" stroke="#C0452A" stroke-width="1.4" fill="none"/>
<rect x="1698.5" y="304.95" width="7.5" height="1.1" fill="#C0452A"/>
<rect x="1698.5" y="307.75" width="7.5" height="1.1" fill="#C0452A"/>
<rect x="1698.5" y="310.55" width="7.5" height="1.1" fill="#C0452A"/>
<rect x="1698.5" y="313.45" width="7.5" height="1.1" fill="#C0452A"/>
<rect x="1686" y="317.05" width="20" height="1.1" fill="#C0452A"/>
<rect x="1686" y="320.05" width="20" height="1.1" fill="#C0452A"/>
<path d="M1579 350.5 H1686.5 L1695 341 L1703.5 350.5 H1905" stroke="#BDBDBD" stroke-width="1" fill="none"/>
<path d="M1597.5 363 V372.5 H1588 Z" stroke="#404040" stroke-width="0.5" fill="#404040"/>
<text x="1607.14" y="373.70" font-size="14.83" textLength="60.67" lengthAdjust="spacingAndGlyphs" fill="#B7472A" font-weight="700">Text Box</text>
<text x="1607.23" y="404.90" font-size="15.26" textLength="120.38" lengthAdjust="spacingAndGlyphs" fill="#444444">Vertical alignment</text>
<rect x="1607" y="406.5" width="9" height="1" fill="#444444"/>
<rect x="1758.5" y="386.5" width="121" height="25" fill="#FFF" stroke="#ABABAB" stroke-width="1"/>
<text x="1764.27" y="404.90" font-size="15.26" textLength="51.19" lengthAdjust="spacingAndGlyphs" fill="#444444">Bottom</text>
<path d="M1864 396.5 H1873.3 L1868.65 401.5 Z" stroke="#555" stroke-width="0.5" fill="#555"/>
<text x="1606.96" y="440.80" font-size="15.26" textLength="90.62" lengthAdjust="spacingAndGlyphs" fill="#444444">Text direction</text>
<rect x="1622" y="442.5" width="8" height="1" fill="#444444"/>
<rect x="1758.5" y="422.5" width="121" height="25" fill="#FFF" stroke="#ABABAB" stroke-width="1"/>
<text x="1764.31" y="440.80" font-size="15.26" textLength="70.84" lengthAdjust="spacingAndGlyphs" fill="#444444">Horizontal</text>
<path d="M1864 432.5 H1873.3 L1868.65 437.5 Z" stroke="#555" stroke-width="0.5" fill="#555"/>
<circle cx="1615.2" cy="476.5" r="7" fill="#FFF" stroke="#B0B0B0" stroke-width="1"/>
<circle cx="1615.2" cy="505.6" r="7" fill="#FFF" stroke="#B0B0B0" stroke-width="1"/>
<circle cx="1615.2" cy="534.7" r="7" fill="#FFF" stroke="#B0B0B0" stroke-width="1"/>
<circle cx="1615.2" cy="505.6" r="3.6" fill="#777"/>
<text x="1627.99" y="482.00" font-size="15.26" textLength="96.93" lengthAdjust="spacingAndGlyphs" fill="#444444">Do not Autofit</text>
<rect x="1629" y="483.5" width="11" height="1" fill="#444444"/>
<text x="1628.62" y="511.10" font-size="15.26" textLength="152.05" lengthAdjust="spacingAndGlyphs" fill="#444444">Shrink text on overflow</text>
<rect x="1629" y="512.6" width="8" height="1" fill="#444444"/>
<text x="1628.08" y="540.20" font-size="15.26" textLength="150.83" lengthAdjust="spacingAndGlyphs" fill="#444444">Resize shape to fit text</text>
<rect x="1736" y="541.7" width="5" height="1" fill="#444444"/>
<text x="1605.92" y="572.50" font-size="15.26" textLength="77.89" lengthAdjust="spacingAndGlyphs" fill="#444444">Left margin</text>
<rect x="1607" y="574.0" width="8" height="1" fill="#444444"/>
<rect x="1787.5" y="554.9" width="92" height="25" fill="#FFF" stroke="#ABABAB" stroke-width="1"/>
<text x="1794.81" y="570.90" font-size="13.08" textLength="21.92" lengthAdjust="spacingAndGlyphs" fill="#333333">0.1&quot;</text>
<path d="M1865.5 561.9 L1868.5 558.9 L1871.5 561.9" stroke="#555" stroke-width="1.1" fill="none"/>
<path d="M1865.5 571.9 L1868.5 574.9 L1871.5 571.9" stroke="#555" stroke-width="1.1" fill="none"/>
<text x="1605.93" y="605.50" font-size="15.26" textLength="87.67" lengthAdjust="spacingAndGlyphs" fill="#444444">Right margin</text>
<rect x="1607" y="607.0" width="8" height="1" fill="#444444"/>
<rect x="1787.5" y="587.9" width="92" height="25" fill="#FFF" stroke="#ABABAB" stroke-width="1"/>
<text x="1794.81" y="603.90" font-size="13.08" textLength="21.92" lengthAdjust="spacingAndGlyphs" fill="#333333">0.1&quot;</text>
<path d="M1865.5 594.9 L1868.5 591.9 L1871.5 594.9" stroke="#555" stroke-width="1.1" fill="none"/>
<path d="M1865.5 604.9 L1868.5 607.9 L1871.5 604.9" stroke="#555" stroke-width="1.1" fill="none"/>
<text x="1606.86" y="638.80" font-size="15.26" textLength="77.64" lengthAdjust="spacingAndGlyphs" fill="#444444">Top margin</text>
<rect x="1607" y="640.3" width="8" height="1" fill="#444444"/>
<rect x="1787.5" y="621.0" width="92" height="25" fill="#FFF" stroke="#ABABAB" stroke-width="1"/>
<text x="1794.81" y="637.00" font-size="13.08" textLength="28.72" lengthAdjust="spacingAndGlyphs" fill="#333333">0.05&quot;</text>
<path d="M1865.5 628.0 L1868.5 625.0 L1871.5 628.0" stroke="#555" stroke-width="1.1" fill="none"/>
<path d="M1865.5 638.0 L1868.5 641.0 L1871.5 638.0" stroke="#555" stroke-width="1.1" fill="none"/>
<text x="1605.91" y="671.60" font-size="15.26" textLength="102.41" lengthAdjust="spacingAndGlyphs" fill="#444444">Bottom margin</text>
<rect x="1607" y="673.1" width="8" height="1" fill="#444444"/>
<rect x="1787.5" y="653.8" width="92" height="25" fill="#FFF" stroke="#ABABAB" stroke-width="1"/>
<text x="1794.81" y="669.80" font-size="13.08" textLength="28.72" lengthAdjust="spacingAndGlyphs" fill="#333333">0.05&quot;</text>
<path d="M1865.5 660.8 L1868.5 657.8 L1871.5 660.8" stroke="#555" stroke-width="1.1" fill="none"/>
<path d="M1865.5 670.8 L1868.5 673.8 L1871.5 670.8" stroke="#555" stroke-width="1.1" fill="none"/>
<rect x="1607.5" y="688.5" width="15" height="15" fill="#FFF" stroke="#ABABAB" stroke-width="1"/>
<text x="1629.03" y="701.30" font-size="15.26" textLength="124.33" lengthAdjust="spacingAndGlyphs" fill="#444444">Wrap text in shape</text>
<rect x="1629" y="702.8" width="13" height="1" fill="#444444"/>
<rect x="1607.5" y="718.5" width="87" height="30" fill="#FFF" stroke="#ABABAB" stroke-width="1"/>
<text x="1617.48" y="738.60" font-size="15.26" textLength="67.71" lengthAdjust="spacingAndGlyphs" fill="#444444">Columns...</text>
<rect x="1618" y="740" width="8" height="1" fill="#444444"/>
<text x="8.80" y="1012.20" font-size="14.53" textLength="65.84" lengthAdjust="spacingAndGlyphs" fill="#444444">Slide 1 of 1</text>
<path d="M100.5 1000.5 H107 Q108.5 1001 108.5 1003 V1012 Q107 1010.5 100.5 1010.5 Z M108.5 1003 Q110 1000.5 116.5 1000.5 V1010.5 H112" stroke="#555" stroke-width="1.2" fill="none"/>
<path d="M109 1011 L111 1013.5 L115 1009" stroke="#555" stroke-width="1.2" fill="none"/>
<text x="138.24" y="1012.20" font-size="14.53" textLength="131.55" lengthAdjust="spacingAndGlyphs" fill="#444444">English (United States)</text>
<path d="M1292.5 1001 L1296.0 998 L1299.5 1001" stroke="#555" stroke-width="1.1" fill="none"/>
<rect x="1286" y="1004.5" width="20" height="1" fill="#555"/>
<rect x="1286" y="1008.5" width="20" height="1" fill="#555"/>
<rect x="1286" y="1012.5" width="20" height="1" fill="#555"/>
<text x="1307.07" y="1012.40" font-size="14.53" textLength="36.03" lengthAdjust="spacingAndGlyphs" fill="#444444">Notes</text>
<path d="M1368.5 999.5 H1385.5 V1010.5 H1374 L1370.5 1014 V1010.5 H1368.5 Z" stroke="#555" stroke-width="1.2" fill="none"/>
<text x="1388.64" y="1012.40" font-size="14.53" textLength="62.52" lengthAdjust="spacingAndGlyphs" fill="#444444">Comments</text>
<rect x="1475" y="993" width="49" height="24" fill="#D2D0CE"/>
<rect x="1491.5" y="1000.5" width="17" height="13" fill="none" stroke="#555" stroke-width="1.2"/>
<rect x="1495.5" y="1003.5" width="10" height="6" fill="none" stroke="#555" stroke-width="1.2"/>
<rect x="1541.5" y="1000.5" width="7" height="5.5" fill="none" stroke="#555" stroke-width="1.2"/>
<rect x="1551.5" y="1000.5" width="7" height="5.5" fill="none" stroke="#555" stroke-width="1.2"/>
<rect x="1541.5" y="1008.5" width="7" height="5.5" fill="none" stroke="#555" stroke-width="1.2"/>
<rect x="1551.5" y="1008.5" width="7" height="5.5" fill="none" stroke="#555" stroke-width="1.2"/>
<path d="M1591.5 1000.5 H1599.5 V1014 H1591.5 Z M1599.5 1000.5 H1607.5 V1014 H1599.5 M1593.5 1004 H1597.5 M1593.5 1007 H1597.5 M1601.5 1004 H1605.5 M1601.5 1007 H1605.5" stroke="#555" stroke-width="1.1" fill="none"/>
<path d="M1641 1000.5 H1657.5 M1642.5 1000.5 V1008.5 H1656 V1000.5 M1649.25 1008.5 V1014 M1646 1014 H1652.5" stroke="#555" stroke-width="1.2" fill="none"/>
<rect x="1682" y="1006" width="10" height="1.3" fill="#555"/>
<rect x="1698" y="1006.5" width="125" height="1" fill="#B0B0B0"/>
<rect x="1745" y="1000" width="6" height="14" fill="#666"/>
<rect x="1760" y="1003" width="1" height="7" fill="#B0B0B0"/>
<path d="M1829 1006.7 H1838.6 M1833.8 1002 V1011.5" stroke="#555" stroke-width="1.3" fill="none"/>
<text x="1854.97" y="1012.40" font-size="14.53" textLength="24.57" lengthAdjust="spacingAndGlyphs" fill="#444444">80%</text>
<path d="M1900.5 1002.5 H1908.5 V1010.5 H1900.5 Z" stroke="#555" stroke-width="1.3" fill="none"/>
<path d="M1898 1004 L1895.5 1006.5 L1898 1009 M1911 1004 L1913.5 1006.5 L1911 1009 M1902.5 1000 L1904.5 997.5 L1906.5 1000 M1902.5 1013 L1904.5 1015.5 L1906.5 1013" stroke="#555" stroke-width="1.2" fill="none"/>
</svg>
</body></html>
